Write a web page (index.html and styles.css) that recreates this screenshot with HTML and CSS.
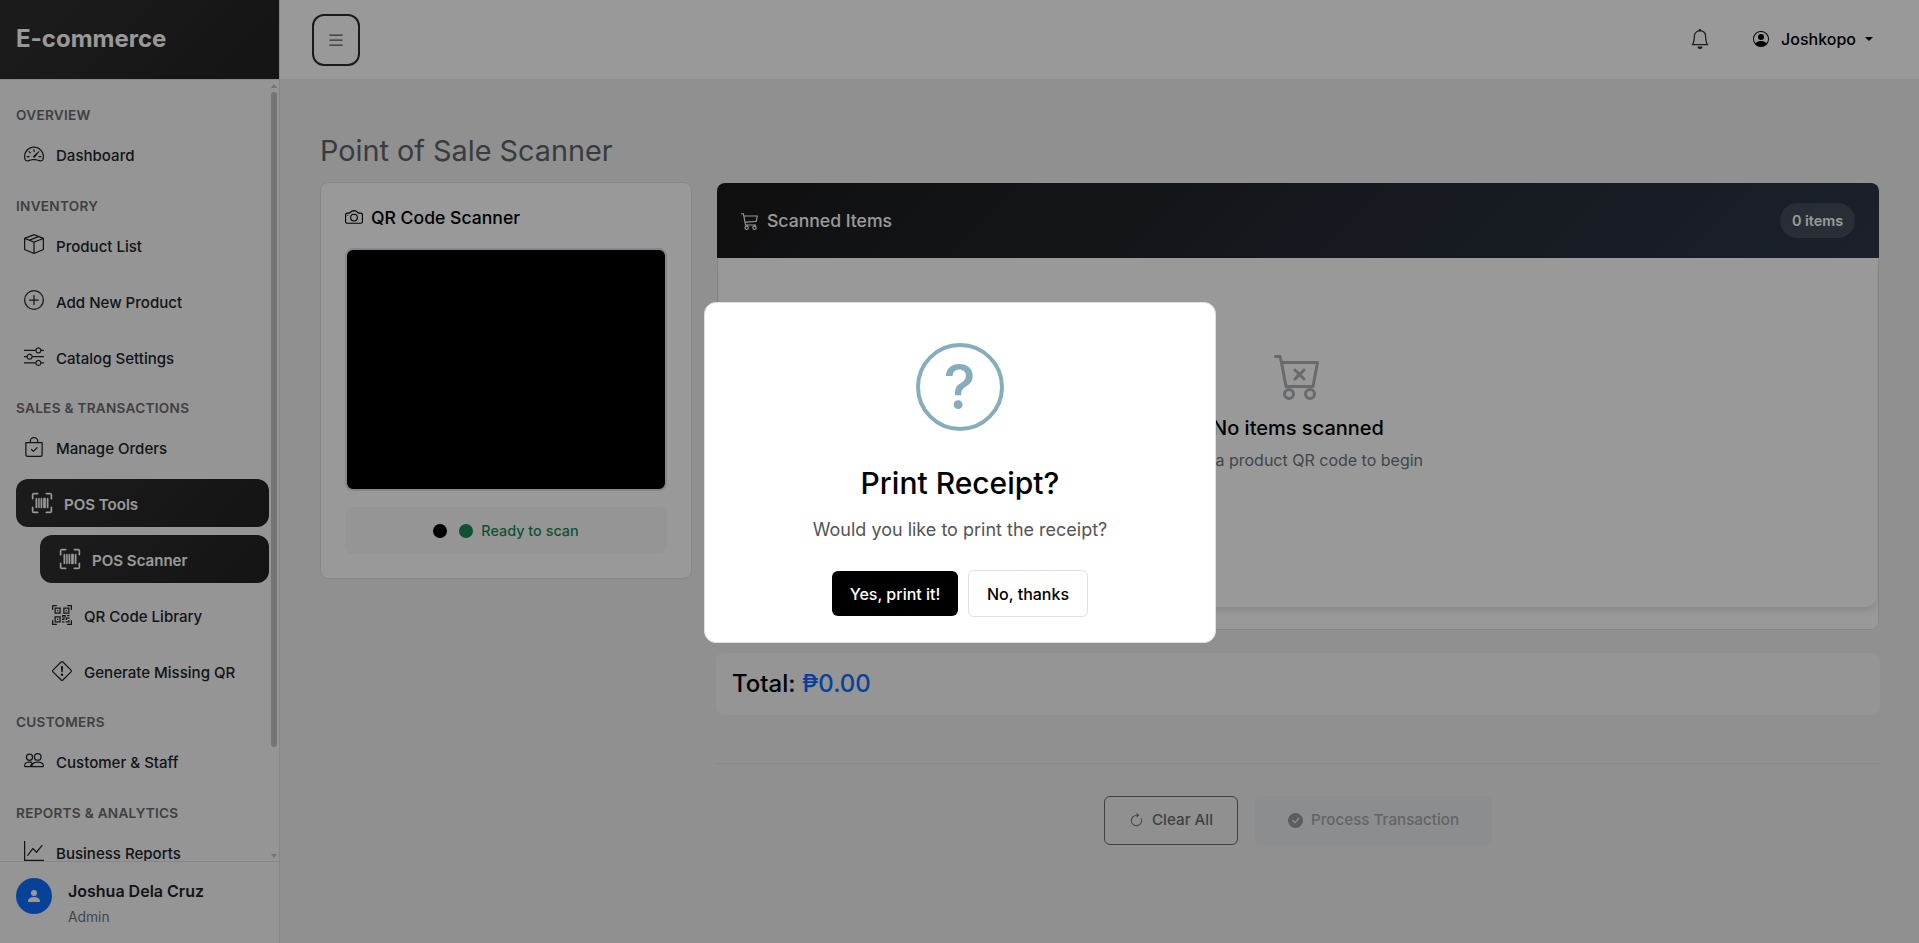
FILE: index.html
```html
<!DOCTYPE html>
<html lang="en">
<head>
<meta charset="utf-8">
<title>Point of Sale Scanner</title>
<link rel="stylesheet" href="styles.css">
</head>
<body>
<svg class="symbols" width="0" height="0">
  <symbol id="upc-scan" viewBox="0 0 16 16"><path d="M1.500 1a.5.5 0 0 0-.5.5v3a.5.5 0 0 1-1 0v-3A1.500 1.500 0 0 1 1.500 0h3a.5.5 0 0 1 0 1zM11 .5a.5.5 0 0 1 .5-.5h3A1.500 1.500 0 0 1 16 1.500v3a.5.5 0 0 1-1 0v-3a.5.5 0 0 0-.5-.5h-3a.5.5 0 0 1-.5-.5M.5 11a.5.5 0 0 1 .5.5v3a.5.5 0 0 0 .5.5h3a.5.5 0 0 1 0 1h-3A1.500 1.500 0 0 1 0 14.500v-3a.5.5 0 0 1 .5-.5m15 0a.5.5 0 0 1 .5.5v3a1.500 1.500 0 0 1-1.500 1.500h-3a.5.5 0 0 1 0-1h3a.5.5 0 0 0 .5-.5v-3a.5.5 0 0 1 .5-.5M3 4.500a.5.5 0 0 1 1 0v7a.5.5 0 0 1-1 0zm2 0a.5.5 0 0 1 1 0v7a.5.5 0 0 1-1 0zm2 0a.5.5 0 0 1 1 0v7a.5.5 0 0 1-1 0zm2 0a.5.5 0 0 1 .5-.5h1a.5.5 0 0 1 .5.5v7a.5.5 0 0 1-.5.5h-1a.5.5 0 0 1-.5-.5zm3 0a.5.5 0 0 1 1 0v7a.5.5 0 0 1-1 0z"/></symbol>
</svg>
<div class="app">
  <aside class="sidebar">
    <div class="brand">E-commerce</div>
    <div class="nav-wrap">
      <nav class="nav">
        <div class="nav-heading">OVERVIEW</div>
        <a class="nav-item"><svg class="icon" viewBox="0 0 16 16"><path d="M8 4a.5.5 0 0 1 .5.5V6a.5.5 0 0 1-1 0V4.500A.5.5 0 0 1 8 4M3.732 5.732a.5.5 0 0 1 .707 0l.915.914a.5.5 0 1 1-.708.708l-.914-.915a.5.5 0 0 1 0-.707M2 10a.5.5 0 0 1 .5-.5h1.586a.5.5 0 0 1 0 1H2.500A.5.5 0 0 1 2 10m9.500 0a.5.5 0 0 1 .5-.5h1.500a.5.5 0 0 1 0 1H12a.5.5 0 0 1-.5-.5m.754-4.246a.39.39 0 0 0-.527-.02L7.547 9.310a.91.91 0 1 0 1.302 1.258l3.434-4.297a.39.39 0 0 0-.029-.518z"/><path fill-rule="evenodd" d="M0 10a8 8 0 1 1 15.547 2.661c-.442 1.253-1.845 1.602-2.932 1.250C11.309 13.488 9.475 13 8 13c-1.474 0-3.310.488-4.615.911-1.087.352-2.490.003-2.932-1.250A8 8 0 0 1 0 10m8-7a7 7 0 0 0-6.603 9.329c.203.575.923.876 1.680.63C4.397 12.533 6.358 12 8 12s3.604.532 4.923.96c.757.245 1.477-.056 1.680-.631A7 7 0 0 0 8 3"/></svg><span>Dashboard</span></a>
        <div class="nav-heading">INVENTORY</div>
        <a class="nav-item"><svg class="icon" viewBox="0 0 16 16"><path d="M8.186 1.113a.5.5 0 0 0-.372 0L1.846 3.500l2.404.961L10.404 2zm3.564 1.426L5.596 5 8 5.961 14.154 3.500zm3.250 1.700-6.500 2.600v7.922l6.500-2.600V4.240zM7.500 14.762V6.838L1 4.239v7.923zM7.443.184a1.500 1.500 0 0 1 1.114 0l7.129 2.852A.5.5 0 0 1 16 3.500v8.662a1 1 0 0 1-.629.928l-7.185 2.874a.5.5 0 0 1-.372 0L.63 13.090a1 1 0 0 1-.63-.928V3.500a.5.5 0 0 1 .314-.464z"/></svg><span>Product List</span></a>
        <a class="nav-item"><svg class="icon" viewBox="0 0 16 16"><path d="M8 15A7 7 0 1 1 8 1a7 7 0 0 1 0 14m0 1A8 8 0 1 0 8 0a8 8 0 0 0 0 16"/><path d="M8 4a.5.5 0 0 1 .5.5v3h3a.5.5 0 0 1 0 1h-3v3a.5.5 0 0 1-1 0v-3h-3a.5.5 0 0 1 0-1h3v-3A.5.5 0 0 1 8 4"/></svg><span>Add New Product</span></a>
        <a class="nav-item"><svg class="icon" viewBox="0 0 16 16"><path fill-rule="evenodd" d="M11.500 2a1.500 1.500 0 1 0 0 3 1.500 1.500 0 0 0 0-3M9.050 3a2.500 2.500 0 0 1 4.900 0H16v1h-2.050a2.500 2.500 0 0 1-4.900 0H0V3zM4.500 7a1.500 1.500 0 1 0 0 3 1.500 1.500 0 0 0 0-3M2.050 8a2.500 2.500 0 0 1 4.900 0H16v1H6.950a2.500 2.500 0 0 1-4.900 0H0V8zm9.450 4a1.500 1.500 0 1 0 0 3 1.500 1.500 0 0 0 0-3m-2.450 1a2.500 2.500 0 0 1 4.900 0H16v1h-2.050a2.500 2.500 0 0 1-4.900 0H0v-1z"/></svg><span>Catalog Settings</span></a>
        <div class="nav-heading">SALES &amp; TRANSACTIONS</div>
        <a class="nav-item"><svg class="icon" viewBox="0 0 16 16"><path fill-rule="evenodd" d="M10.854 8.146a.5.5 0 0 1 0 .708l-3 3a.5.5 0 0 1-.708 0l-1.500-1.500a.5.5 0 0 1 .708-.708L7.500 10.793l2.646-2.647a.5.5 0 0 1 .708 0"/><path d="M8 1a2.500 2.500 0 0 1 2.500 2.500V4h-5v-.5A2.500 2.500 0 0 1 8 1m3.500 3v-.5a3.500 3.500 0 1 0-7 0V4H1v10a2 2 0 0 0 2 2h10a2 2 0 0 0 2-2V4zM2 5h12v9a1 1 0 0 1-1 1H3a1 1 0 0 1-1-1z"/></svg><span>Manage Orders</span></a>
        <a class="nav-item active"><svg class="icon"><use href="#upc-scan"/></svg><span>POS Tools</span></a>
        <a class="nav-item sub active"><svg class="icon"><use href="#upc-scan"/></svg><span>POS Scanner</span></a>
        <a class="nav-item sub"><svg class="icon" viewBox="0 0 16 16"><path d="M0 .5A.5.5 0 0 1 .5 0h3a.5.5 0 0 1 0 1H1v2.500a.5.5 0 0 1-1 0zm12 0a.5.5 0 0 1 .5-.5h3a.5.5 0 0 1 .5.5v3a.5.5 0 0 1-1 0V1h-2.500a.5.5 0 0 1-.5-.5M.5 12a.5.5 0 0 1 .5.5V15h2.500a.5.5 0 0 1 0 1h-3a.5.5 0 0 1-.5-.5v-3a.5.5 0 0 1 .5-.5m15 0a.5.5 0 0 1 .5.5v3a.5.5 0 0 1-.5.5h-3a.5.5 0 0 1 0-1H15v-2.500a.5.5 0 0 1 .5-.5M4 4h1v1H4z"/><path d="M7 2H2v5h5zM3 3h3v3H3zm2 8H4v1h1z"/><path d="M7 9H2v5h5zm-4 1h3v3H3zm8-6h1v1h-1z"/><path d="M9 2h5v5H9zm1 1v3h3V3zM8 8v2h1v1H8v1h2v-2h1v2h1v-1h2v-1h-3V8zm2 2H9V9h1zm4 2h-1v1h-2v1h3zm-4 2v-1H8v1z"/><path d="M12 9h2V8h-2z"/></svg><span>QR Code Library</span></a>
        <a class="nav-item sub"><svg class="icon" viewBox="0 0 16 16"><path d="M6.950.435c.58-.58 1.520-.58 2.100 0l6.515 6.516c.58.58.58 1.519 0 2.098L9.050 15.565c-.58.58-1.519.58-2.098 0L.435 9.050a1.480 1.480 0 0 1 0-2.098zm1.400.7a.495.495 0 0 0-.7 0L1.134 7.650a.495.495 0 0 0 0 .7l6.516 6.516a.495.495 0 0 0 .7 0l6.516-6.516a.495.495 0 0 0 0-.7L8.350 1.134z"/><path d="M7.002 11a1 1 0 1 1 2 0 1 1 0 0 1-2 0M7.100 4.995a.905.905 0 1 1 1.800 0l-.35 3.507a.552.552 0 0 1-1.100 0z"/></svg><span>Generate Missing QR</span></a>
        <div class="nav-heading">CUSTOMERS</div>
        <a class="nav-item"><svg class="icon line" viewBox="0 0 16 16"><circle cx="4.400" cy="5" r="2.450"/><circle cx="11" cy="4.700" r="2.650"/><path d="M6.200 12.500c0-2.300 1.700-3.700 4.700-3.700s4.600 1.400 4.600 3.100c0 .4-.2.600-.6.600zM5.800 12.500H1.100c-.4 0-.6-.2-.6-.6 0-1.700 1.300-3.100 3.900-3.100.8 0 1.500.1 2 .3M6.600 9.500 5.200 12"/></svg><span>Customer &amp; Staff</span></a>
        <div class="nav-heading">REPORTS &amp; ANALYTICS</div>
        <a class="nav-item"><svg class="icon" viewBox="0 0 16 16"><path fill-rule="evenodd" d="M0 0h1v15h15v1H0zm14.817 3.113a.5.5 0 0 1 .07.704l-4.500 5.500a.5.5 0 0 1-.74.037L7.060 6.767l-3.656 5.027a.5.5 0 0 1-.808-.588l4-5.500a.5.5 0 0 1 .758-.06l2.609 2.610 4.150-5.073a.5.5 0 0 1 .704-.07"/></svg><span>Business Reports</span></a>
      </nav>
      <div class="scrollbar"><i class="arrow up"></i><i class="thumb"></i><i class="arrow down"></i></div>
    </div>
    <div class="profile">
      <div class="avatar"><svg viewBox="0 0 16 16"><path d="M3 14s-1 0-1-1 1-4 6-4 6 3 6 4-1 1-1 1zm5-6a3 3 0 1 0 0-6 3 3 0 0 0 0 6"/></svg></div>
      <div><div class="profile-name">Joshua Dela Cruz</div><div class="profile-role">Admin</div></div>
    </div>
  </aside>
  <div class="page">
    <header class="topbar">
      <div class="menu-btn"><svg viewBox="0 0 16 16"><path d="M2.500 12a.5.5 0 0 1 .5-.5h10a.5.5 0 0 1 0 1H3a.5.5 0 0 1-.5-.5m0-4a.5.5 0 0 1 .5-.5h10a.5.5 0 0 1 0 1H3a.5.5 0 0 1-.5-.5m0-4a.5.5 0 0 1 .5-.5h10a.5.5 0 0 1 0 1H3a.5.5 0 0 1-.5-.5"/></svg></div>
      <div class="top-right">
        <svg class="bell" viewBox="0 0 16 16"><path d="M8 16a2 2 0 0 0 2-2H6a2 2 0 0 0 2 2M8 1.918l-.797.161A4 4 0 0 0 4 6c0 .628-.134 2.197-.459 3.742-.16.767-.376 1.566-.663 2.258h10.244c-.287-.692-.502-1.490-.663-2.258C12.134 8.197 12 6.628 12 6a4 4 0 0 0-3.203-3.920zM14.220 12c.223.447.481.801.78 1H1c.299-.199.557-.553.78-1C2.680 10.200 3 6.880 3 6c0-2.420 1.720-4.440 4.005-4.901a1 1 0 1 1 1.990 0A5 5 0 0 1 13 6c0 .88.32 4.200 1.220 6"/></svg>
        <svg class="user-icon" viewBox="0 0 16 16"><path d="M11 6a3 3 0 1 1-6 0 3 3 0 0 1 6 0"/><path fill-rule="evenodd" d="M0 8a8 8 0 1 1 16 0A8 8 0 0 1 0 8m8-7a7 7 0 0 0-5.468 11.370C3.242 11.226 4.805 10 8 10s4.757 1.225 5.468 2.370A7 7 0 0 0 8 1"/></svg>
        <span class="user-name">Joshkopo</span><i class="caret"></i>
      </div>
    </header>
    <main class="content">
      <h1 class="title">Point of Sale Scanner</h1>
      <div class="columns">
        <section class="scanner">
          <h2 class="scanner-title"><svg viewBox="0 0 16 16"><path d="M15 12a1 1 0 0 1-1 1H2a1 1 0 0 1-1-1V6a1 1 0 0 1 1-1h1.172a3 3 0 0 0 2.120-.879l.83-.828A1 1 0 0 1 6.827 3h2.344a1 1 0 0 1 .707.293l.828.828A3 3 0 0 0 12.828 5H14a1 1 0 0 1 1 1zM2 4a2 2 0 0 0-2 2v6a2 2 0 0 0 2 2h12a2 2 0 0 0 2-2V6a2 2 0 0 0-2-2h-1.172a2 2 0 0 1-1.414-.586l-.828-.828A2 2 0 0 0 9.172 2H6.828a2 2 0 0 0-1.414.586l-.828.828A2 2 0 0 1 3.172 4z"/><path d="M8 11a2.500 2.500 0 1 1 0-5 2.500 2.500 0 0 1 0 5m0 1a3.500 3.500 0 1 0 0-7 3.500 3.500 0 0 0 0 7M3 6.500a.5.5 0 1 1-1 0 .5.5 0 0 1 1 0"/></svg><span>QR Code Scanner</span></h2>
          <div class="video"></div>
          <div class="status"><i class="dot"></i><i class="dot green"></i><span>Ready to scan</span></div>
        </section>
        <div class="right">
          <section class="items">
            <div class="items-head">
              <svg viewBox="0 0 16 16"><path d="M0 1.500A.5.5 0 0 1 .5 1H2a.5.5 0 0 1 .485.379L2.890 3H14.500a.5.5 0 0 1 .49.598l-1 5a.5.5 0 0 1-.465.401l-9.397.472L4.415 11H13a.5.5 0 0 1 0 1H4a.5.5 0 0 1-.491-.408L2.010 3.607 1.610 2H.5a.5.5 0 0 1-.5-.5M3.102 4l.84 4.479 9.144-.459L13.890 4zM5 12a2 2 0 1 0 0 4 2 2 0 0 0 0-4m7 0a2 2 0 1 0 0 4 2 2 0 0 0 0-4m-7 1a1 1 0 1 1 0 2 1 1 0 0 1 0-2m7 0a1 1 0 1 1 0 2 1 1 0 0 1 0-2"/></svg>
              <span class="items-title">Scanned Items</span><span class="badge">0 items</span>
            </div>
            <div class="items-frame">
              <div class="items-body">
                <svg viewBox="0 0 16 16"><path d="M7.354 5.646a.5.5 0 1 0-.708.708L7.793 7.500 6.646 8.646a.5.5 0 1 0 .708.708L8.500 8.207l1.146 1.147a.5.5 0 0 0 .708-.708L9.207 7.500l1.147-1.146a.5.5 0 0 0-.708-.708L8.500 6.793z"/><path d="M.5 1a.5.5 0 0 0 0 1h1.110l.401 1.607 1.498 7.985A.5.5 0 0 0 4 12h1a2 2 0 1 0 0 4 2 2 0 0 0 0-4h7a2 2 0 1 0 0 4 2 2 0 0 0 0-4h1a.5.5 0 0 0 .491-.408l1.500-8A.5.5 0 0 0 14.500 3H2.890l-.405-1.621A.5.5 0 0 0 2 1zm3.915 10L3.102 4h10.796l-1.313 7zM6 14a1 1 0 1 1-2 0 1 1 0 0 1 2 0m7 0a1 1 0 1 1-2 0 1 1 0 0 1 2 0"/></svg>
                <div class="empty-title">No items scanned</div>
                <div class="empty-text">Scan a product QR code to begin</div>
              </div>
            </div>
          </section>
          <div class="total">Total: <span>₱0.00</span></div>
          <div class="actions">
            <div class="btn clear"><svg viewBox="0 0 16 16"><path fill-rule="evenodd" d="M8 3a5 5 0 1 0 4.546 2.914.5.5 0 0 1 .908-.417A6 6 0 1 1 8 2z"/><path d="M8 4.466V.534a.25.25 0 0 1 .41-.192l2.360 1.966c.12.1.12.284 0 .384L8.410 4.658A.25.25 0 0 1 8 4.466"/></svg><span>Clear All</span></div>
            <div class="btn process"><svg viewBox="0 0 16 16"><path d="M16 8A8 8 0 1 1 0 8a8 8 0 0 1 16 0m-3.970-3.030a.75.75 0 0 0-1.080.022L7.477 9.417 5.384 7.323a.75.75 0 0 0-1.060 1.060L6.970 11.030a.75.75 0 0 0 1.079-.02l3.992-4.990a.75.75 0 0 0-.01-1.050z"/></svg><span>Process Transaction</span></div>
          </div>
        </div>
      </div>
    </main>
  </div>
</div>
<div class="overlay">
  <div class="modal">
    <div class="question">?</div>
    <div class="modal-title">Print Receipt?</div>
    <div class="modal-text">Would you like to print the receipt?</div>
    <div class="modal-actions"><div class="modal-btn yes">Yes, print it!</div><div class="modal-btn no">No, thanks</div></div>
  </div>
</div>
</body>
</html>
```

FILE: styles.css
```css
* { box-sizing: border-box; }
html, body { margin: 0; height: 100%; overflow: hidden; }
body { font-family: Inter, "Liberation Sans", sans-serif; font-size: 16px; line-height: 1.5; color: #000; background: #f0f0f0; }
svg { display: block; fill: currentColor; flex: none; }
.app { display: flex; height: 943px; }

.sidebar { width: 280px; flex: none; display: flex; flex-direction: column; background: #f8f8fb; border-right: 1px solid #dee2e6; }
.brand { height: 79px; flex: none; padding: 0 16px 2px; display: flex; align-items: center; font-size: 24px; font-weight: 700; color: #fff; background: linear-gradient(135deg, #2f2f2f, #222); }
.nav-wrap { flex: none; height: 782px; display: flex; overflow: hidden; border-top: 1px solid #dee2e6; }
.nav { flex: 1; padding: 16px 0 0 16px; }
.nav-heading { height: 34.4px; padding-top: 9.2px; font-size: 13.6px; line-height: 20.4px; font-weight: 600; letter-spacing: .28px; color: #6c6c6e; }
.nav-item { display: flex; align-items: center; gap: 12px; height: 48px; margin-bottom: 8px; padding: 0 8px; border-radius: 12px; font-size: 15.05px; font-weight: 500; color: #212529; }
.nav-item span { padding-top: 4px; }
.nav-item .icon { width: 20px; height: 20px; margin-top: -1px; }
.icon.line { fill: none; stroke: currentColor; }
.nav-item.sub { margin-left: 24px; padding-left: 12px; }
.nav-item.active { color: #fff; font-weight: 600; padding-left: 16px; background: linear-gradient(135deg, #2f2f2f, #222); }
.nav-item.sub.active { padding-left: 20px; }
.nav-item.active .icon { stroke: currentColor; stroke-width: .35; overflow: visible; }
#upc-scan { overflow: visible; }
.scrollbar { width: 10px; display: flex; flex-direction: column; align-items: center; padding: 4px 0 3px; }
.thumb { width: 6px; height: 655px; margin-top: 4px; border-radius: 3px; background: #c4c4c6; }
.arrow { width: 0; border: 3px solid transparent; }
.arrow.up { border-bottom: 4px solid #c0c0c2; border-top-width: 0; }
.arrow.down { border-top: 4px solid #c0c0c2; border-bottom-width: 0; margin-top: auto; }
.profile { flex: 1; display: flex; gap: 16px; padding: 16px; border-top: 1px solid #dee2e6; }
.avatar { width: 36px; height: 36px; border-radius: 50%; display: flex; align-items: center; justify-content: center; color: #fff; background: #0d6efd; }
.avatar svg { width: 16px; height: 16px; }
.profile-name { font-size: 16px; line-height: 26px; font-weight: 600; color: #212529; }
.profile-role { font-size: 13.8px; line-height: 26px; color: #6c757d; }

.page { flex: 1; display: flex; flex-direction: column; }
.topbar { height: 79px; flex: none; display: flex; align-items: center; justify-content: space-between; padding: 0 46px 0 32px; background: #fff; }
.menu-btn { width: 48px; height: 52px; border: 2px solid #2d2d2d; border-radius: 12px; display: flex; align-items: center; justify-content: center; color: #555; margin-top: 1px; }
.menu-btn svg { width: 20px; height: 20px; }
.top-right { display: flex; align-items: center; padding-bottom: 1px; }
.bell { width: 20px; height: 20px; color: #333; margin-right: 43px; }
.user-icon { width: 16px; height: 16px; }
.user-name { font-weight: 500; margin: 0 9px 0 12px; }
.caret { border: 4px solid transparent; border-top-color: #000; border-bottom: 0; }

.content { flex: 1; padding: 50px 39px 0 40px; }
.title { margin: 0; height: 53px; padding-top: 1px; font-size: 28.8px; line-height: 42px; font-weight: 400; color: #606468; }
.columns { display: flex; gap: 24px; align-items: flex-start; }
.scanner { width: 372px; height: 397px; flex: none; padding: 24px; background: #fff; border: 1px solid #dee2e6; border-radius: 8px; }
.scanner-title { margin: 0; height: 41px; display: flex; align-items: flex-start; gap: 8px; font-size: 17.6px; line-height: 22px; font-weight: 500; }
.scanner-title svg { width: 18px; height: 18px; margin-top: 1px; }
.video { height: 243px; border: 2px solid #dee2e6; border-radius: 8px; background: #010001; }
.status { height: 47px; margin-top: 16px; border-radius: 8px; background: #f8f8fb; display: flex; align-items: center; justify-content: center; font-size: 14.4px; font-weight: 500; color: #198754; }
.dot { width: 14px; height: 14px; border-radius: 50%; background: #000; margin-right: 12px; }
.dot.green { background: #198754; margin-right: 8px; }

.right { flex: 1; }
.items { height: 447px; margin: 1px 1px 0; border-radius: 8px; overflow: hidden; background: #fff; display: flex; flex-direction: column; }
.items-head { height: 75px; flex: none; display: flex; align-items: center; padding: 0 24px 0 24px; color: #fff; background: linear-gradient(135deg, #1a1a1a, #2d3748); }
.items-head svg { width: 18px; height: 18px; margin-top: 1px; }
.items-title { flex: 1; margin-left: 8px; padding-top: 1px; font-size: 17.6px; font-weight: 500; }
.badge { width: 75px; height: 35px; border-radius: 18px; background: rgba(255,255,255,.12); display: flex; align-items: center; justify-content: center; font-size: 14.4px; font-weight: 600; }
.items-frame { flex: 1; border: 1px solid #dee2e6; border-top: 0; border-radius: 0 0 8px 8px; }
.items-body { height: 349px; border-radius: 12px; box-shadow: 0 4px 6px rgba(0,0,0,.1); display: flex; flex-direction: column; align-items: center; padding-top: 94px; margin: 0 1px; }
.items-body svg { width: 48px; height: 48px; color: #adb1b5; }
.empty-title { margin-top: 16px; font-size: 20px; line-height: 24px; font-weight: 500; }
.empty-text { margin-top: 8px; line-height: 24px; color: #6c757d; }
.total { margin-top: 23px; height: 62px; padding: 16px; border-radius: 8px; background: #f8f8fb; font-size: 24px; line-height: 29px; font-weight: 500; }
.total span { color: #0d6efd; }
.actions { margin-top: 48px; border-top: 1px solid #dee2e6; padding-top: 32px; display: flex; justify-content: center; gap: 17px; }
.btn { height: 49px; border-radius: 6px; display: flex; align-items: center; justify-content: center; font-size: 15.2px; font-weight: 500; }
.clear { width: 134px; border: 1px solid #6c6c6c; color: #6c6c6c; gap: 8px; }
.clear svg { width: 15px; height: 15px; }
.process { width: 237px; background: #e8ebef; color: #a6a7a8; gap: 8px; }
.process svg { width: 15px; height: 15px; color: #9a9b9c; }

.overlay { position: fixed; inset: 0; background: rgba(0,0,0,.4); display: flex; justify-content: center; align-items: flex-start; padding-top: 302px; }
.modal { width: 512px; height: 341px; border-radius: 12px; border: 1px solid #e0e0e0; background: #fff; display: flex; flex-direction: column; align-items: center; padding-top: 40px; }
.question { width: 88px; height: 88px; border: 4px solid #87adbd; border-radius: 50%; color: #87adbd; font-size: 61px; line-height: 81px; text-align: center; font-weight: 500; }
.modal-title { margin-top: 34px; padding-left: 1px; font-size: 30px; line-height: 36px; font-weight: 500; }
.modal-text { margin-top: 15px; padding-left: 1px; font-size: 18px; line-height: 27px; color: #545454; }
.modal-actions { display: flex; align-items: center; gap: 10px; margin-top: 27px; }
.modal-btn { display: flex; align-items: center; justify-content: center; border-radius: 6px; font-weight: 500; padding-left: 1px; }
.yes { width: 126px; height: 45px; background: #000; color: #fff; }
.no { width: 120px; height: 47px; border: 1px solid #dee2e6; }
```
